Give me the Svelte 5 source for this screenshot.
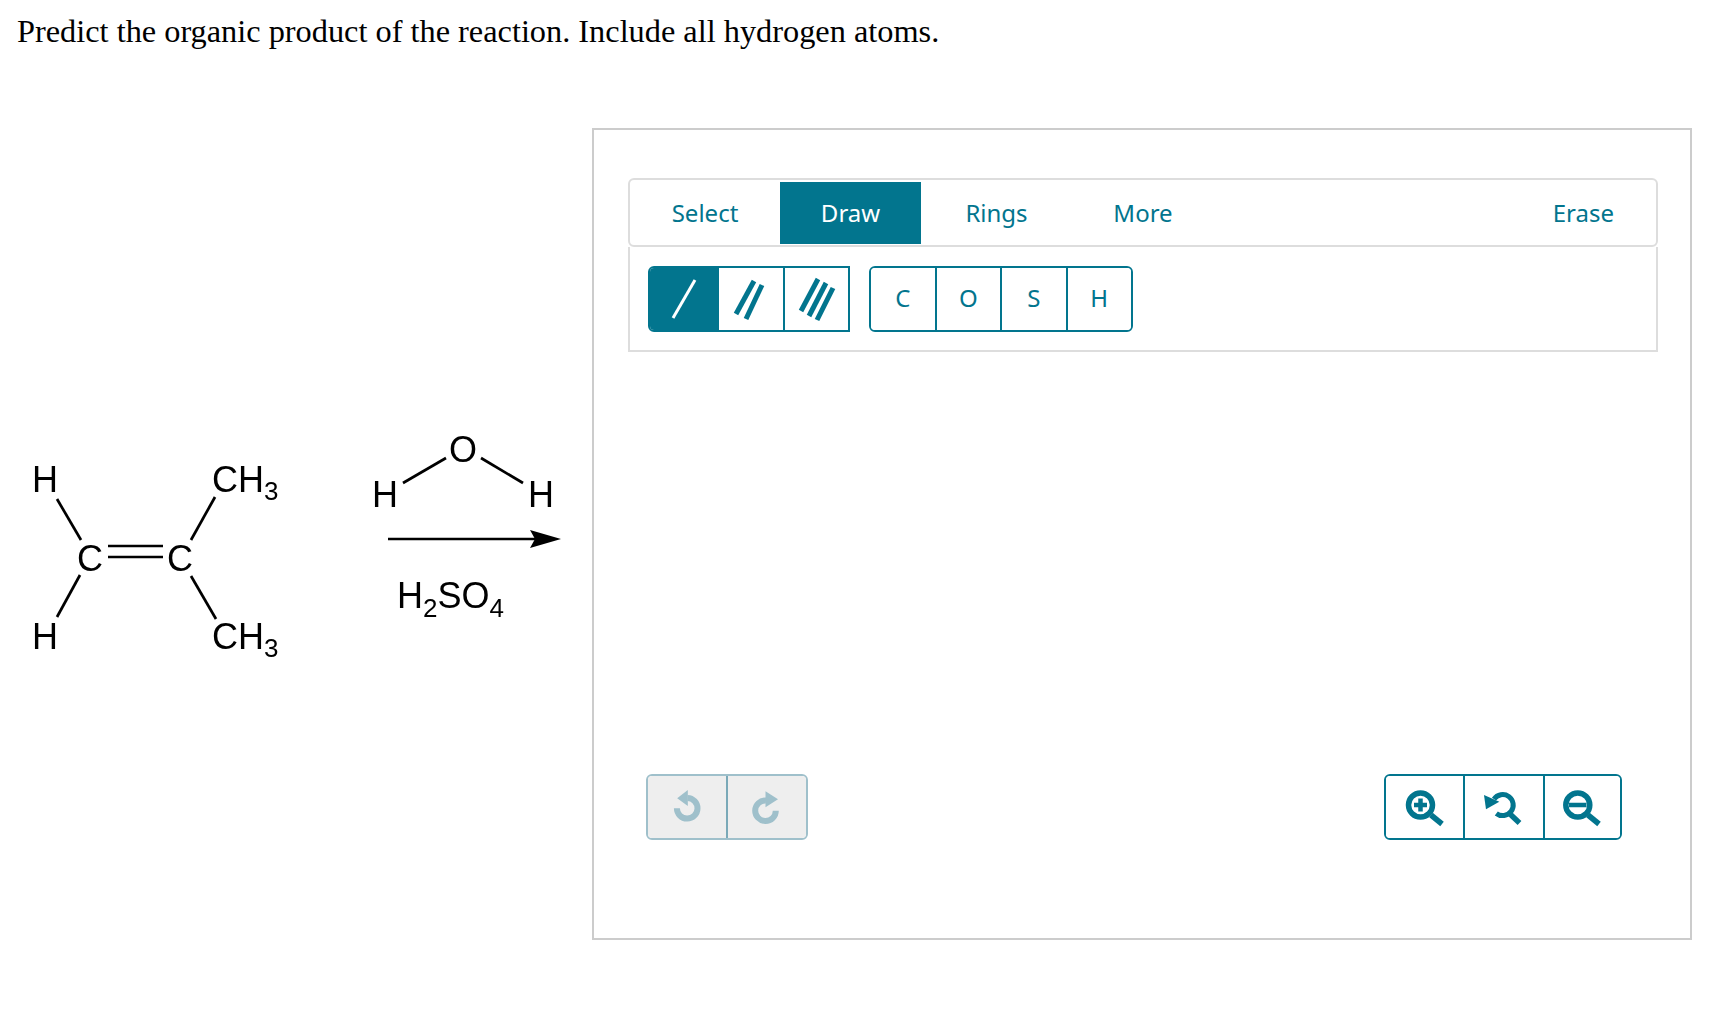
<script>
	const tabs = [
		{ label: 'Select', width: 150 },
		{ label: 'Draw', width: 141, active: true },
		{ label: 'Rings', width: 151 },
		{ label: 'More', width: 142 }
	];
	const atoms = ['C', 'O', 'S', 'H'];
</script>

<div class="page">
	<p class="question">Predict the organic product of the reaction. Include all hydrogen atoms.</p>

	<div class="content">
		<div class="reaction">
			<svg class="molecule" width="300" height="260" viewBox="0 420 300 260">
				<g class="bonds">
					<line x1="57" y1="499" x2="81" y2="540" />
					<line x1="80" y1="575" x2="57" y2="617" />
					<line x1="215" y1="497" x2="191" y2="540" />
					<line x1="191" y1="576" x2="216" y2="619" />
					<line x1="108" y1="546" x2="163" y2="546" />
					<line x1="108" y1="557" x2="163" y2="557" />
				</g>
				<text x="32" y="492">H</text>
				<text x="32" y="649">H</text>
				<text x="77" y="571">C</text>
				<text x="167" y="571">C</text>
				<text x="212" y="492">CH<tspan class="sub" dy="8">3</tspan></text>
				<text x="212" y="649">CH<tspan class="sub" dy="8">3</tspan></text>
			</svg>

			<svg class="reagent" width="240" height="220" viewBox="340 420 240 220">
				<g class="bonds">
					<line x1="403" y1="483" x2="446" y2="458" />
					<line x1="481" y1="458" x2="523" y2="483" />
					<line x1="388" y1="539" x2="535" y2="539" />
				</g>
				<polygon points="561,539 530,530 535,539 530,548" fill="#000" />
				<text x="449" y="462">O</text>
				<text x="372" y="507">H</text>
				<text x="528" y="507">H</text>
				<text x="397" y="608">H<tspan class="sub" dy="9">2</tspan><tspan dy="-9">SO</tspan><tspan class="sub" dy="9">4</tspan></text>
			</svg>
		</div>

		<div class="sketcher">
			<div class="tabbar">
				{#each tabs as tab}
					<button class="tab" class:active={tab.active} style="width: {tab.width}px">{tab.label}</button>
				{/each}
				<button class="tab erase">Erase</button>
			</div>

			<div class="panel">
				<div class="group bonds-group">
					<button class="cell selected" aria-label="single bond">
						<svg width="32" height="44" viewBox="0 0 32 44">
							<line x1="27" y1="3" x2="5" y2="41" stroke="#fff" stroke-width="3" />
						</svg>
					</button>
					<button class="cell" aria-label="double bond">
						<svg class="nudge" width="36" height="46" viewBox="0 0 36 46">
							<line x1="23" y1="5" x2="5" y2="38" stroke="#02758e" stroke-width="5" />
							<line x1="31" y1="9" x2="15" y2="43" stroke="#02758e" stroke-width="5" />
						</svg>
					</button>
					<button class="cell" aria-label="triple bond">
						<svg width="42" height="48" viewBox="0 0 42 48">
							<line x1="22" y1="4" x2="5" y2="36" stroke="#02758e" stroke-width="5" />
							<line x1="30" y1="8" x2="13" y2="41" stroke="#02758e" stroke-width="5" />
							<line x1="37" y1="13" x2="21" y2="45" stroke="#02758e" stroke-width="5" />
						</svg>
					</button>
				</div>

				<div class="group atoms-group">
					{#each atoms as atom}
						<button class="cell atom">{atom}</button>
					{/each}
				</div>
			</div>

			<div class="actions">
				<div class="group history">
					<button class="cell" aria-label="undo">
						<svg width="36" height="36" viewBox="0 0 36 36">
							<path d="M18.5 9A10.3 10.3 0 1 1 7.9 19.3" fill="none" stroke="#9fc0cb" stroke-width="6" />
							<polygon points="18.8,1 18.8,17 8.2,9.3" fill="#9fc0cb" />
						</svg>
					</button>
					<button class="cell" aria-label="redo">
						<svg width="36" height="36" viewBox="0 0 36 36">
							<path d="M17 11.4A10.3 10.3 0 1 0 26.8 21.7" fill="none" stroke="#9fc0cb" stroke-width="6" />
							<polygon points="16.5,2.2 16.5,18.2 29,10.3" fill="#9fc0cb" />
						</svg>
					</button>
				</div>

				<div class="group zoom">
					<button class="cell" aria-label="zoom in">
						<svg width="48" height="48" viewBox="1 0 48 48">
							<g fill="none" stroke="#02758e">
								<circle cx="20.5" cy="22" r="12" stroke-width="5.5" />
								<line x1="31" y1="32" x2="42" y2="41" stroke-width="5.5" />
								<path d="M14 22H27M20.5 15.5V28.5" stroke-width="4.5" />
							</g>
						</svg>
					</button>
					<button class="cell" aria-label="reset zoom">
						<svg width="48" height="48" viewBox="0 0 48 48">
							<g fill="none" stroke="#02758e">
								<path d="M14 16.2A10.5 10.5 0 1 1 16.3 30.4" stroke-width="5" />
								<line x1="30" y1="31" x2="39.5" y2="40" stroke-width="5.5" />
							</g>
							<polygon points="4,12 6,26.3 19.3,18.7" fill="#02758e" />
						</svg>
					</button>
					<button class="cell" aria-label="zoom out">
						<svg width="48" height="48" viewBox="1 0 48 48">
							<g fill="none" stroke="#02758e">
								<circle cx="19.8" cy="22" r="12" stroke-width="5.5" />
								<line x1="30" y1="32" x2="41" y2="41" stroke-width="5.5" />
								<path d="M11 22H28.5" stroke-width="4.5" />
							</g>
						</svg>
					</button>
				</div>
			</div>
		</div>
	</div>
</div>

<style>
	:global(body) {
		background: #fff;
	}

	.page {
		width: 1714px;
		height: 1010px;
		overflow: hidden;
	}

	.question {
		margin: 0;
		padding: 13px 0 0 17px;
		font-family: "Liberation Serif", serif;
		font-size: 32.35px;
		line-height: 37px;
		color: #000;
	}

	.content {
		display: flex;
		align-items: flex-start;
		margin-top: 78px;
	}

	.reaction {
		display: flex;
		align-items: flex-start;
		width: 592px;
		padding-top: 292px;
		gap: 40px;
		flex: none;
		box-sizing: border-box;
		filter: blur(0.35px);
	}

	.reaction svg {
		display: block;
		flex: none;
	}

	.bonds line {
		stroke: #000;
		stroke-width: 2.7;
	}

	.reaction text {
		font-family: "Liberation Sans", Arial, sans-serif;
		font-size: 36px;
		fill: #000;
	}

	.reaction .sub {
		font-size: 26px;
	}

	.sketcher {
		width: 1100px;
		height: 812px;
		box-sizing: border-box;
		border: 2px solid #ccc;
		padding: 48px 32px 0 34px;
		flex: none;
		font-family: "Noto Sans", sans-serif;
	}

	.tabbar {
		display: flex;
		height: 69px;
		box-sizing: border-box;
		border: 2px solid #ddd;
		border-radius: 6px;
		padding: 2px 0 1px;
	}

	.tab {
		border: none;
		background: transparent;
		padding: 0 0 2px;
		font: inherit;
		font-size: 24px;
		color: #02758e;
	}

	.tab.active {
		background: #02758e;
		color: #fff;
	}

	.erase {
		margin-left: auto;
		padding-right: 42px;
	}

	.panel {
		display: flex;
		gap: 19px;
		height: 105px;
		box-sizing: border-box;
		border: 2px solid #ddd;
		border-top: none;
		padding: 19px 0 0 18px;
	}

	.group {
		display: flex;
		height: 66px;
		box-sizing: border-box;
		border: 2px solid #02758e;
		border-radius: 6px;
		overflow: hidden;
	}

	.cell {
		display: flex;
		align-items: center;
		justify-content: center;
		padding: 0;
		border: none;
		border-left: 2px solid #02758e;
		background: #fff;
		font: inherit;
		color: #02758e;
		box-sizing: border-box;
	}

	.cell:first-child {
		border-left: none;
	}

	.bonds-group {
		width: 202px;
		border-radius: 6px 0 0 6px;
	}

	.bonds-group .cell {
		flex: 0 0 66px;
	}

	.bonds-group .cell:first-child {
		flex: 0 0 67px;
	}

	.cell.selected {
		background: #02758e;
	}

	.nudge {
		margin-right: 4px;
	}

	.atoms-group {
		width: 264px;
	}

	.atom {
		flex: 1;
		font-size: 24px;
		padding-bottom: 4px;
	}

	.actions {
		display: flex;
		justify-content: space-between;
		margin-top: 422px;
		padding: 0 36px 0 18px;
	}

	.history {
		width: 162px;
		border-color: #9fc0cb;
	}

	.history .cell {
		flex: 1;
		background: #eee;
		border-left-color: #7aa9b8;
	}

	.zoom {
		width: 238px;
	}

	.zoom .cell {
		flex: 0 0 77px;
	}

	.zoom .cell + .cell {
		flex: 0 0 80px;
	}

	.zoom .cell + .cell + .cell {
		flex: 1;
	}
</style>
